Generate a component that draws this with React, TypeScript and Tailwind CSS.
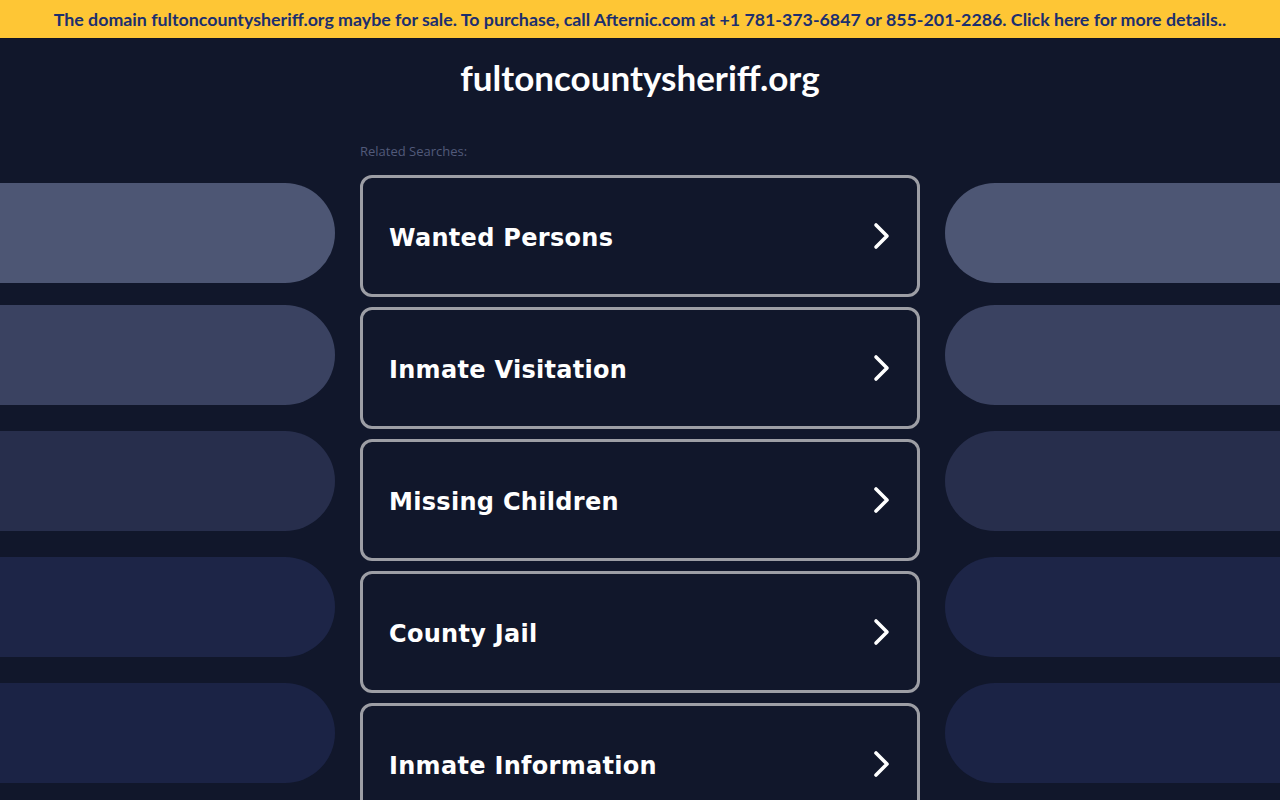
import React from 'react';

const searches = [
  'Wanted Persons',
  'Inmate Visitation',
  'Missing Children',
  'County Jail',
  'Inmate Information',
];

// side pills: top offset + colour
const pills = [
  { mt: 'mt-0', bg: 'bg-[#4d5674]' },
  { mt: 'mt-[22px]', bg: 'bg-[#3a4261]' },
  { mt: 'mt-[26px]', bg: 'bg-[#272e4c]' },
  { mt: 'mt-[26px]', bg: 'bg-[#1d2547]' },
  { mt: 'mt-[26px]', bg: 'bg-[#1b2345]' },
];

const Chevron = () => (
  <svg width="22" height="30" viewBox="0 0 22 30" fill="none">
    <path d="M5 4 L16 15 L5 26" stroke="white" strokeWidth="3.6" strokeLinecap="round" strokeLinejoin="round" />
  </svg>
);

export default function App() {
  return (
    <div className="min-h-screen w-full bg-[#11172b] overflow-hidden">
      {/* sale banner */}
      <div className="h-[39px] bg-[#fec635] border-b border-[#0f1424] flex items-center justify-center">
        <span className="text-[#1c2f6e] text-[17.8px] font-bold whitespace-nowrap" style={{ fontFamily: '"Lato", "Open Sans", sans-serif' }}>
          The domain fultoncountysheriff.org maybe for sale. To purchase, call Afternic.com at +1 781-373-6847 or 855-201-2286. Click here for more details..
        </span>
      </div>

      <h1
        className="text-center text-white text-[35px] font-bold mt-[18px] leading-[40px]"
        style={{ fontFamily: '"Lato", "Open Sans", sans-serif' }}
      >
        fultoncountysheriff.org
      </h1>

      <div className="flex mt-[45px] w-full">
        {/* left pills */}
        <div className="w-[335px] shrink-0 flex flex-col pt-[41px]">
          {pills.map((p, i) => (
            <div key={i} className={`h-[100px] rounded-r-full ${p.bg} ${p.mt}`} />
          ))}
        </div>

        <div className="flex-1 flex justify-center">
          <div className="w-[560px]">
            <div className="text-[13px] text-[#525a7a] leading-[18px] mb-[15px]" style={{ fontFamily: '"Open Sans", sans-serif' }}>
              Related Searches:
            </div>
            {searches.map((s) => (
              <div
                key={s}
                className="h-[122px] mb-[10px] border-[3px] border-[#9d9ea5] rounded-[12px] flex items-center justify-between pl-[26px] pr-[24px]"
              >
                <span className="text-white text-[24px] font-bold tracking-[0.3px] pt-[4px]" style={{ fontFamily: '"DejaVu Sans", Verdana, sans-serif' }}>
                  {s}
                </span>
                <Chevron />
              </div>
            ))}
          </div>
        </div>

        {/* right pills */}
        <div className="w-[335px] shrink-0 flex flex-col pt-[41px]">
          {pills.map((p, i) => (
            <div key={i} className={`h-[100px] rounded-l-full ${p.bg} ${p.mt}`} />
          ))}
        </div>
      </div>
    </div>
  );
}
